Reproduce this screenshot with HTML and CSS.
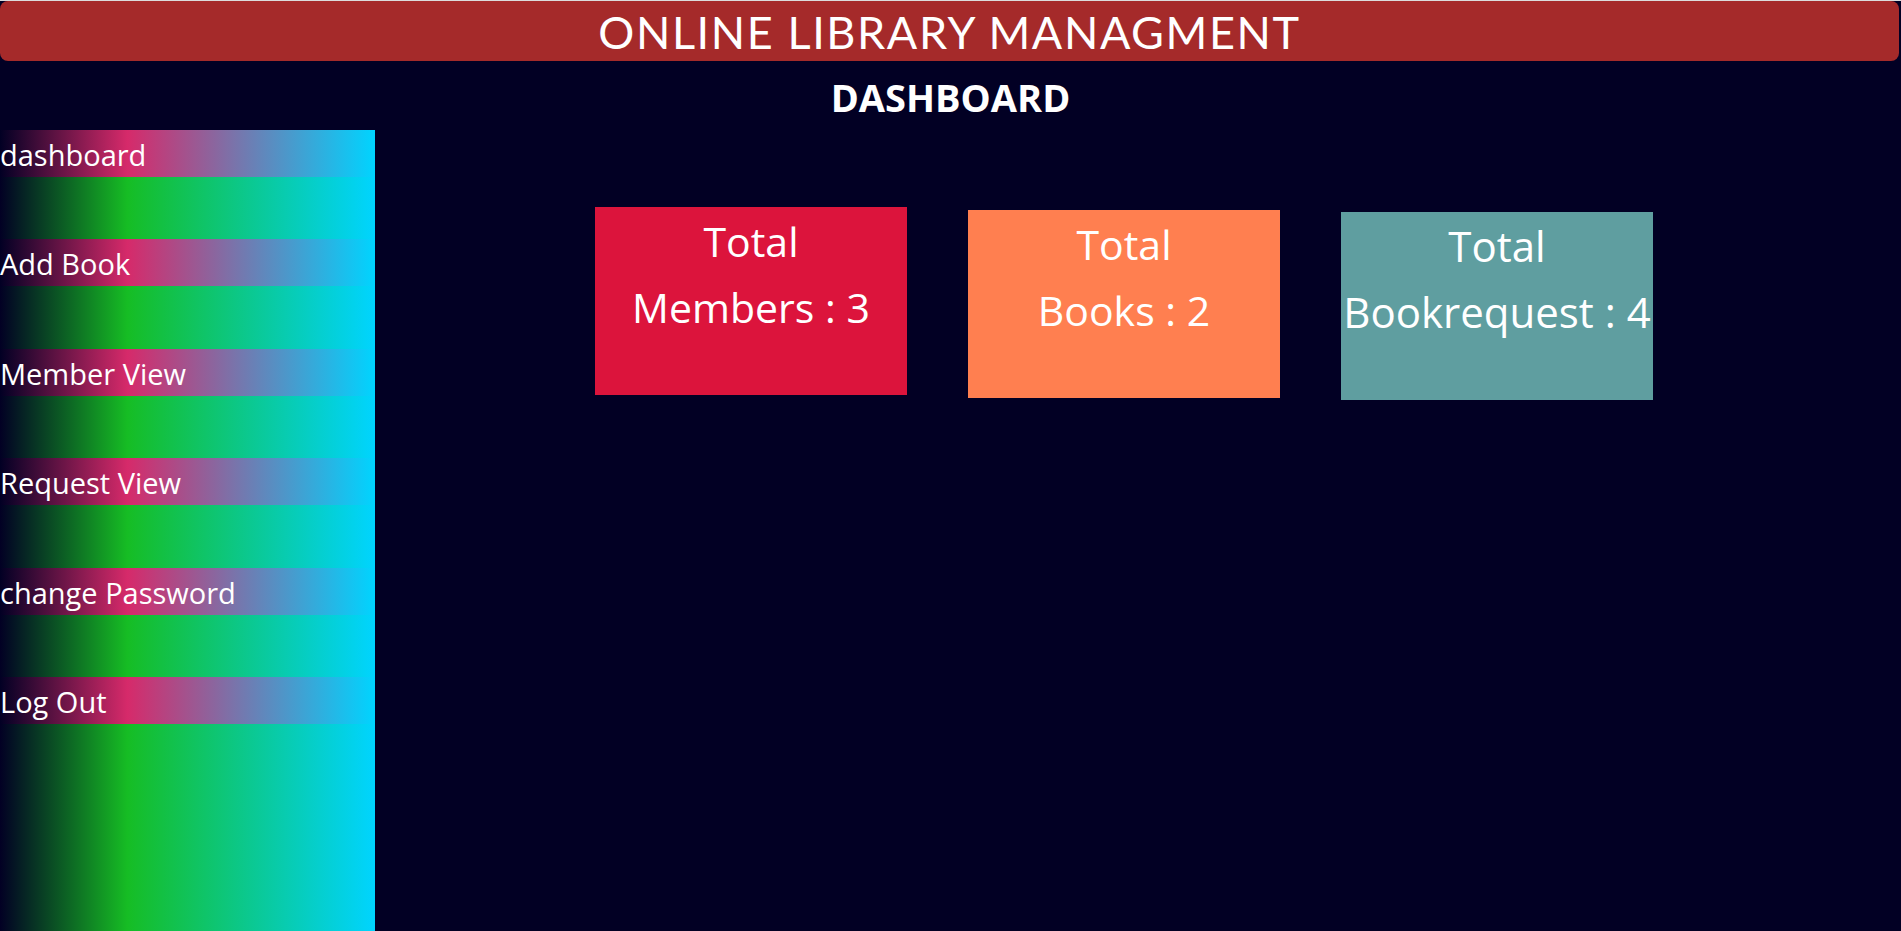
FILE: index.html
```html
<!DOCTYPE html>
<html lang="en">
<head>
<meta charset="utf-8">
<title>Online Library Managment - Dashboard</title>
<link rel="stylesheet" href="styles.css">
</head>
<body>
  <header class="topbar">ONLINE LIBRARY MANAGMENT</header>
  <h2 class="page-title">DASHBOARD</h2>
  <div class="layout">
    <nav class="sidebar">
      <a class="nav-item" href="#">dashboard</a>
      <a class="nav-item" href="#">Add Book</a>
      <a class="nav-item" href="#">Member View</a>
      <a class="nav-item" href="#">Request View</a>
      <a class="nav-item" href="#">change Password</a>
      <a class="nav-item" href="#">Log Out</a>
    </nav>
    <main class="content">
      <div class="card card-members">Total<br>Members : 3</div>
      <div class="card card-books">Total<br>Books : 2</div>
      <div class="card card-requests">Total<br>Bookrequest : 4</div>
    </main>
  </div>
</body>
</html>
```
FILE: styles.css
```css
html, body {
  margin: 0;
  padding: 0;
}
body {
  background: rgb(2, 0, 36);
  border-top: 1px solid #dcdcdc;
  height: 930px;
  display: flex;
  flex-direction: column;
  color: #fff;
  font-family: "Open Sans", "Noto Sans", sans-serif;
  overflow: hidden;
}
.topbar {
  height: 60px;
  margin-right: 2px;
  background: #a52a2a;
  border-radius: 8px;
  display: flex;
  align-items: center;
  justify-content: center;
  font-family: Lato, "Open Sans", sans-serif;
  font-size: 45px;
  letter-spacing: 1.6px;
  line-height: 1;
  padding-top: 2px;
  box-sizing: border-box;
}
.page-title {
  margin: 0;
  height: 69px;
  line-height: 69px;
  padding-top: 2px;
  box-sizing: border-box;
  text-align: center;
  font-size: 38px;
  font-weight: 700;
}
.layout {
  flex: 1;
  display: flex;
}
.sidebar {
  width: 375px;
  flex: none;
  display: flex;
  flex-direction: column;
  background: linear-gradient(90deg, rgb(2, 0, 36) 0%, rgb(22, 189, 36) 34%, rgb(0, 212, 255) 100%);
}
.nav-item {
  display: block;
  height: 47px;
  margin-bottom: 62.4px;
  line-height: 47px;
  padding-top: 1px;
  box-sizing: border-box;
  color: #fff;
  text-decoration: none;
  font-size: 29px;
  background: linear-gradient(90deg, rgb(2, 0, 36) 0%, rgb(214, 42, 106) 34%, rgb(0, 212, 255) 100%);
}
.content {
  flex: 1;
  display: flex;
  align-items: flex-start;
  gap: 61px;
  padding: 77px 0 0 220px;
}
.card {
  width: 312px;
  height: 188px;
  flex: none;
  text-align: center;
  font-size: 41px;
  line-height: 66px;
  padding-top: 1px;
  box-sizing: border-box;
  white-space: nowrap;
  display: flex;
  flex-direction: column;
  align-items: center;
}
.card-members {
  background: #dc143c;
}
.card-books {
  background: #ff7f50;
  margin-top: 3px;
}
.card-requests {
  background: #5f9ea0;
  margin-top: 5px;
  font-size: 42px;
}
```
